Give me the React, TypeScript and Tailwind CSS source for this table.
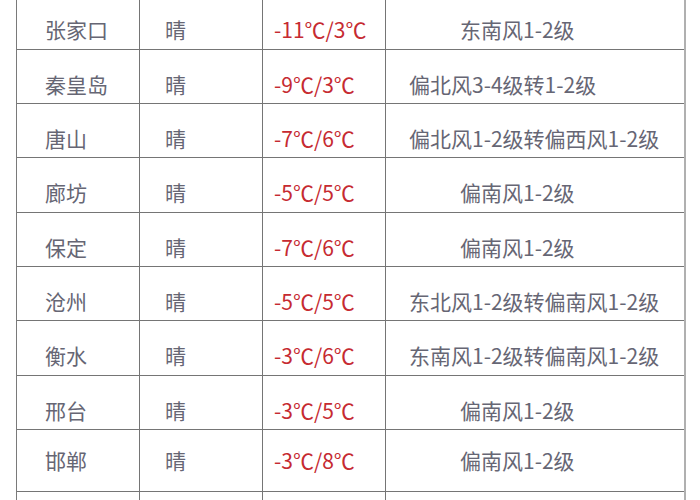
import React from "react";

type Row = { city: string; temp: string; wind: string; windPad: string; h: string; pt: string };

const rows: Row[] = [
  { city: "张家口", temp: "-11℃/3℃", wind: "东南风1-2级", windPad: "pl-[74px]", h: "h-[49px]", pt: "pt-[19px]" },
  { city: "秦皇岛", temp: "-9℃/3℃", wind: "偏北风3-4级转1-2级", windPad: "pl-[23px]", h: "h-[54px]", pt: "pt-[24px]" },
  { city: "唐山", temp: "-7℃/6℃", wind: "偏北风1-2级转偏西风1-2级", windPad: "pl-[23px]", h: "h-[54px]", pt: "pt-[24px]" },
  { city: "廊坊", temp: "-5℃/5℃", wind: "偏南风1-2级", windPad: "pl-[74px]", h: "h-[55px]", pt: "pt-[24px]" },
  { city: "保定", temp: "-7℃/6℃", wind: "偏南风1-2级", windPad: "pl-[74px]", h: "h-[54px]", pt: "pt-[24px]" },
  { city: "沧州", temp: "-5℃/5℃", wind: "东北风1-2级转偏南风1-2级", windPad: "pl-[23px]", h: "h-[54px]", pt: "pt-[24px]" },
  { city: "衡水", temp: "-3℃/6℃", wind: "东南风1-2级转偏南风1-2级", windPad: "pl-[23px]", h: "h-[55px]", pt: "pt-[24px]" },
  { city: "邢台", temp: "-3℃/5℃", wind: "偏南风1-2级", windPad: "pl-[74px]", h: "h-[54px]", pt: "pt-[24px]" },
  { city: "邯郸", temp: "-3℃/8℃", wind: "偏南风1-2级", windPad: "pl-[74px]", h: "h-[62px]", pt: "pt-[20px]" },
  { city: "", temp: "", wind: "", windPad: "pl-[74px]", h: "h-[40px]", pt: "pt-[20px]" },
];

export default function App() {
  return (
    <div
      className="w-[700px] h-[500px] overflow-hidden bg-white"
      style={{ fontFamily: '"Noto Sans CJK SC", "Noto Sans", sans-serif' }}
    >
      <div className="ml-[16px] w-[670px] border-l border-r-2 border-l-[#7a7a7a] border-r-[#b0b0b0]">
        {rows.map((r, i) => (
          <div
            key={i}
            className={`flex ${r.h} ${i > 0 ? "border-t border-[#757575]" : ""} text-[21px] leading-[21px] text-[#666674]`}
          >
            <div className={`w-[123px] shrink-0 pl-[28px] ${r.pt} border-r border-[#757575]`}>{r.city}</div>
            <div className={`w-[123px] shrink-0 pl-[25px] ${r.pt} border-r border-[#757575]`}>{r.city ? "晴" : ""}</div>
            <div className={`w-[123px] shrink-0 pl-[11px] ${r.pt} border-r border-[#757575] text-[#c62a31] whitespace-nowrap`}>
              {r.temp}
            </div>
            <div className={`flex-1 ${r.windPad} ${r.pt} whitespace-nowrap`}>{r.wind}</div>
          </div>
        ))}
      </div>
    </div>
  );
}
